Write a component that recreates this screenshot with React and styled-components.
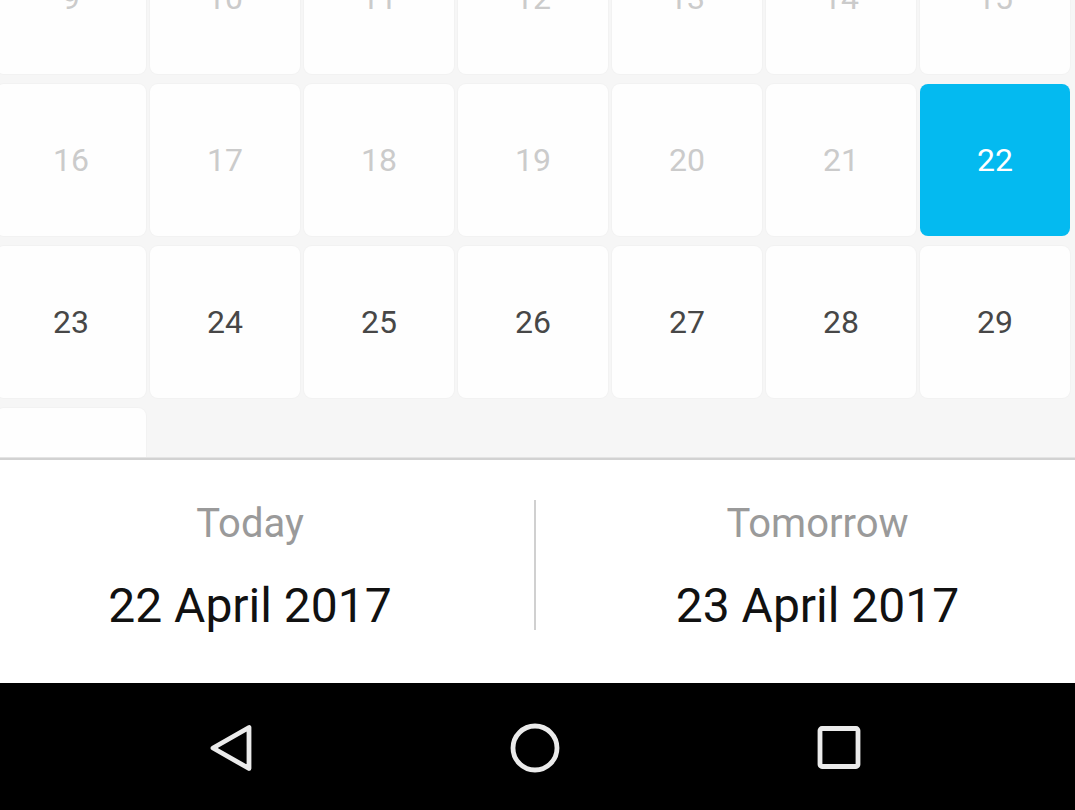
import React from 'react'
import styled, { createGlobalStyle } from 'styled-components'

const GlobalStyle = createGlobalStyle`
body {
  margin: 0;
  background: #ffffff;
  font-family: Roboto, "Noto Sans", "Liberation Sans", sans-serif;
  overflow: hidden;
}
`

const Screen = styled.div`
width: 1075px;
height: 810px;
display: flex;
flex-direction: column;
`

const CalendarViewport = styled.div`
height: 457px;
overflow: hidden;
background-color: #f6f6f6;
`

const MonthGrid = styled.div`
display: grid;
grid-template-columns: repeat(7, 150px);
grid-auto-rows: 152px;
column-gap: 4px;
row-gap: 10px;
margin-top: -78px;
margin-left: -4px;
`

const DayCell = styled.div`
display: flex;
justify-content: center;
align-items: center;
border-radius: 8px;
background-color: ${p => (p.$selected ? '#04baf0' : '#fefefe')};
box-shadow: ${p => (p.$selected ? 'none' : '0 0 0 1px #f2f2f2')};
color: ${p => (p.$selected ? '#ffffff' : p.$past ? '#cbcbcb' : '#474747')};
font-size: 32px;
line-height: 1;
`

const Divider = styled.div`
height: 3px;
background-color: #d2d2d2;
border-top: 1px solid #e4e4e4;
box-sizing: border-box;
`

const QuickPicks = styled.div`
height: 223px;
box-sizing: border-box;
padding-top: 40px;
display: flex;
align-items: flex-start;
background-color: #ffffff;
`

const Pick = styled.div`
flex: ${p => (p.$first ? '0 0 500px' : '1')};
padding-right: ${p => (p.$first ? '0' : '9px')};
display: flex;
flex-direction: column;
align-items: center;
`

const PickLabel = styled.div`
font-size: 40px;
line-height: 48px;
color: #9a9a9a;
`

const PickDate = styled.div`
margin-top: 30px;
font-size: 48px;
line-height: 56px;
color: #111111;
`

const PickSeparator = styled.div`
width: 2px;
height: 130px;
margin: 0 33px 0 34px;
background-color: #d0d0d0;
`

const NavBar = styled.div`
height: 127px;
background-color: #000000;
display: flex;
justify-content: center;
align-items: center;
gap: 248px;
padding-right: 5px;
`

const NavIcon = styled.svg`
width: 56px;
height: 56px;
margin-top: 2px;
fill: none;
stroke: #ebebeb;
stroke-width: 4.8;
stroke-linejoin: round;
stroke-linecap: round;
`

const weeks = [
  [9, 10, 11, 12, 13, 14, 15],
  [16, 17, 18, 19, 20, 21, 22],
  [23, 24, 25, 26, 27, 28, 29],
  [30],
]

const TODAY = 22

const App = () => (
  <Screen>
    <GlobalStyle />
    <CalendarViewport>
      <MonthGrid>
        {weeks.flat().map(day => (
          <DayCell key={day} $past={day < TODAY} $selected={day === TODAY}>
            {day === 30 ? '' : day}
          </DayCell>
        ))}
      </MonthGrid>
    </CalendarViewport>
    <Divider />
    <QuickPicks>
      <Pick $first>
        <PickLabel>Today</PickLabel>
        <PickDate>22 April 2017</PickDate>
      </Pick>
      <PickSeparator />
      <Pick>
        <PickLabel>Tomorrow</PickLabel>
        <PickDate>23 April 2017</PickDate>
      </Pick>
    </QuickPicks>
    <NavBar>
      <NavIcon viewBox="0 0 56 56">
        <path d="M10 28 L46 7.5 L46 48.5 Z" />
      </NavIcon>
      <NavIcon viewBox="0 0 56 56">
        <circle cx="28" cy="28" r="22" />
      </NavIcon>
      <NavIcon viewBox="0 0 56 56">
        <rect x="9" y="8.5" width="38" height="38" rx="2" />
      </NavIcon>
    </NavBar>
  </Screen>
)

export default App
